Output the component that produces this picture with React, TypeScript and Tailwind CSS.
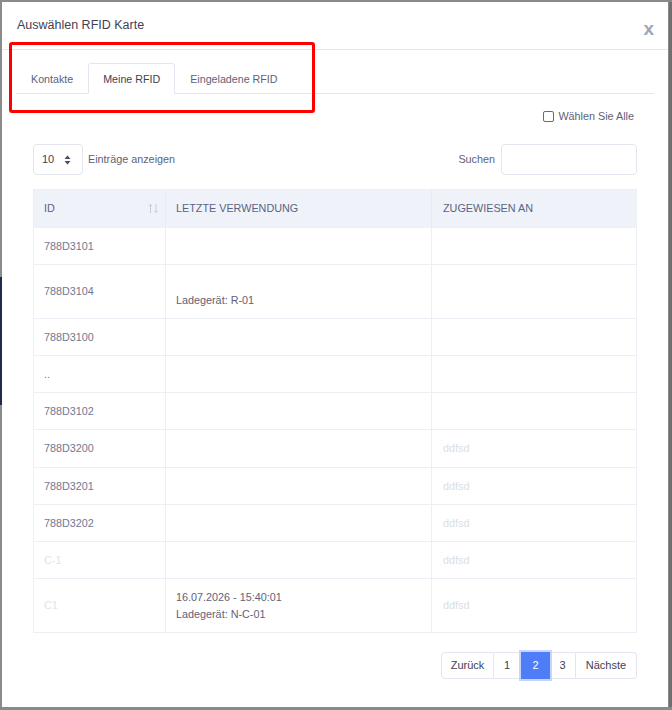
import React from "react";

type Row = { id: string; idLight?: boolean; last?: string[]; assigned?: string; h: string };

const rows: Row[] = [
  { id: "788D3101", h: "h-[37px]" },
  { id: "788D3104", last: ["", "Ladegerät: R-01"], h: "h-[54px]" },
  { id: "788D3100", h: "h-[37px]" },
  { id: "..", h: "h-[37px]" },
  { id: "788D3102", h: "h-[37px]" },
  { id: "788D3200", assigned: "ddfsd", h: "h-[38px]" },
  { id: "788D3201", assigned: "ddfsd", h: "h-[37px]" },
  { id: "788D3202", assigned: "ddfsd", h: "h-[37px]" },
  { id: "C-1", idLight: true, assigned: "ddfsd", h: "h-[37px]" },
  { id: "C1", idLight: true, last: ["16.07.2026 - 15:40:01", "Ladegerät: N-C-01"], assigned: "ddfsd", h: "h-[54px]" },
];

function SortArrows() {
  return (
    <svg width="11" height="11" viewBox="0 0 11 11" fill="none" stroke="#c8ccd8" strokeWidth="1">
      <path d="M2.5 10V1.5M0.8 3.2L2.5 1.5L4.2 3.2" />
      <path d="M8 1V9.5M6.3 7.8L8 9.5L9.7 7.8" />
    </svg>
  );
}

function Carets() {
  return (
    <svg width="7" height="10" viewBox="0 0 7 10" fill="#4a4f60">
      <path d="M3.5 0.5L6.5 4H0.5Z" />
      <path d="M3.5 9.5L6.5 6H0.5Z" />
    </svg>
  );
}

export default function App() {
  return (
    <div
      className="relative w-[672px] h-[710px] bg-[#8a8a8a] pt-[2px] pl-[2px] overflow-hidden"
      style={{ fontFamily: '"Liberation Sans", Arial, sans-serif' }}
    >
      <div className="absolute left-0 top-[277px] w-[2px] h-[128px] bg-[#1f2b4d]" />
      <div className="absolute right-0 top-[2px] w-[3px] h-[705px] bg-[#6f6f6f]" />
      <div className="w-[666px] h-[705px] bg-white flex flex-col">
        {/* header */}
        <div className="h-[48px] border-b border-[#e6e8ef] flex items-center justify-between pl-[15px] pr-[14px] shrink-0">
          <span className="text-[12.5px] text-[#3f4254]">Auswählen RFID Karte</span>
          <span className="text-[19px] font-bold text-[#a1a5b7] leading-none mt-[5px]">x</span>
        </div>

        {/* body */}
        <div className="px-[14px] pt-[13px]">
          <div className="flex h-[31px] border-b border-[#e4e6ef] text-[10.7px] text-[#5e6278]">
            <div className="px-[15px] h-[30px] pt-[2px] flex items-center">Kontakte</div>
            <div className="px-[14px] h-[31px] pt-[1px] -mb-px flex items-center bg-white border border-[#e4e6ef] border-b-white rounded-t-[3px] text-[#3f4254]">
              Meine RFID
            </div>
            <div className="px-[15px] h-[30px] pt-[2px] flex items-center">Eingeladene RFID</div>
          </div>

          <div className="mt-[12px] h-[20px] flex items-center justify-end pr-[20px] gap-[4px] text-[10.8px] text-[#5e6278]">
            <span className="w-[11px] h-[11px] border border-[#6b6b6b] rounded-[2px] bg-white" />
            <span>Wählen Sie Alle</span>
          </div>

          <div className="px-[17px] mt-[18px]">
            <div className="flex items-center justify-between h-[31px]">
              <div className="flex items-center gap-[5px]">
                <div className="w-[50px] h-[31px] border border-[#e4e6ef] rounded-[4px] flex items-center justify-between pl-[8px] pr-[11px] text-[11px] text-[#3f4254]">
                  <span>10</span>
                  <Carets />
                </div>
                <span className="text-[10.8px] text-[#5e6278]">Einträge anzeigen</span>
              </div>
              <div className="flex items-center gap-[6px]">
                <span className="text-[10.8px] text-[#5e6278]">Suchen</span>
                <div className="w-[136px] h-[31px] border border-[#e4e6ef] rounded-[4px]" />
              </div>
            </div>

            <div className="mt-[14px] border border-[#eceff6] text-[10.8px]">
              <div className="grid grid-cols-[131px_266px_205px] h-[37px] bg-[#eff3f9] text-[#5a6481]">
                <div className="flex items-center justify-between pl-[10px] pr-[6px]">
                  <span>ID</span>
                  <SortArrows />
                </div>
                <div className="flex items-center pl-[10px] border-l border-[#e6eaf3]">LETZTE VERWENDUNG</div>
                <div className="flex items-center pl-[11px] border-l border-[#e6eaf3]">ZUGEWIESEN AN</div>
              </div>
              {rows.map((r, i) => (
                <div key={i} className={`grid grid-cols-[131px_266px_205px] border-t border-[#eceff6] ${r.h}`}>
                  <div className={`flex items-center pl-[10px] ${r.idLight ? "text-[#e1e3ea]" : "text-[#6f7892]"}`}>
                    {r.id}
                  </div>
                  <div className="flex flex-col justify-center pl-[10px] border-l border-[#eceff6] text-[#5e6278] leading-[17px]">
                    {r.last
                      ? r.last.map((t, j) => (
                          <div key={j} className="h-[17px]">
                            {t}
                          </div>
                        ))
                      : null}
                  </div>
                  <div className="flex items-center pl-[11px] border-l border-[#eceff6] text-[#dcdee5]">
                    {r.assigned ?? ""}
                  </div>
                </div>
              ))}
            </div>

            <div className="mt-[19px] flex justify-end">
              <div className="flex h-[27px] text-[11px] text-[#3f4254]">
                <div className="w-[53px] flex items-center justify-center border border-[#e4e6ef] rounded-l-[4px]">Zurück</div>
                <div className="w-[27px] flex items-center justify-center border-y border-r border-[#e4e6ef]">1</div>
                <div className="w-[29px] flex items-center justify-center bg-[#4f7df8] text-white ring-2 ring-[#c7d5fc] z-10">2</div>
                <div className="w-[26px] flex items-center justify-center border-y border-r border-[#e4e6ef]">3</div>
                <div className="w-[61px] flex items-center justify-center border-y border-r border-[#e4e6ef] rounded-r-[4px]">Nächste</div>
              </div>
            </div>
          </div>
        </div>
      </div>

      {/* annotation */}
      <div className="absolute left-[9px] top-[42px] w-[306px] h-[71px] border-[3px] border-[#ff0000] rounded-[3px]" />
    </div>
  );
}
